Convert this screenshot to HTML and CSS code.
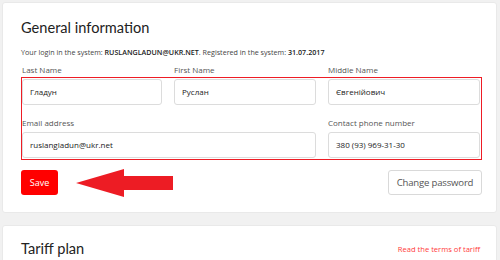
FILE: index.html
```html
<!DOCTYPE html>
<html lang="en">
<head>
    <meta charset="UTF-8">
    <title>Profile</title>
    <link rel="stylesheet" href="styles.css">
</head>
<body>
    <div class="page">
        <div class="card">
            <h2 class="card-title">General information</h2>
            <p class="login-info">Your login in the system: <b>RUSLANGLADUN@UKR.NET</b>. Registered in the system: <b>31.07.2017</b></p>

            <div class="form-area">
                <div class="form-grid">
                    <div class="field">
                        <label>Last Name</label>
                        <div class="input">Гладун</div>
                    </div>
                    <div class="field">
                        <label>First Name</label>
                        <div class="input">Руслан</div>
                    </div>
                    <div class="field">
                        <label>Middle Name</label>
                        <div class="input">Євгенійович</div>
                    </div>
                    <div class="field wide">
                        <label>Email address</label>
                        <div class="input">ruslangladun@ukr.net</div>
                    </div>
                    <div class="field">
                        <label>Contact phone number</label>
                        <div class="input">380 (93) 969-31-30</div>
                    </div>
                </div>
                <!-- annotation frame drawn over the fields -->
                <div class="highlight"></div>
            </div>

            <div class="actions">
                <button class="btn-save">Save</button>
                <svg class="arrow" width="98" height="28" viewBox="0 0 98 28">
                    <polygon points="0,14 48,0 48,7 97,7 97,21 48,21 48,28" fill="#ed1c24"/>
                </svg>
                <button class="btn-outline">Change password</button>
            </div>
        </div>

        <div class="card card-tariff">
            <div class="card-head">
                <h2 class="card-title">Tariff plan</h2>
                <a class="terms-link">Read the terms of tariff</a>
            </div>
        </div>
    </div>
</body>
</html>
```

FILE: styles.css
```css
body {
    margin: 0;
    background-color: #f1f1f1;
    font-family: "Open Sans", "Noto Sans", sans-serif;
    color: #333;
}

.page {
    padding: 2px 3px 0 2px;
    display: flex;
    flex-direction: column;
    gap: 12px;
}

.card {
    background-color: #fff;
    border: 1px solid #e9e9e9;
    border-radius: 3px;
    padding: 14px 16px 17px 18px;
}

.card-title {
    margin: 0;
    font-family: Lato, "Open Sans", sans-serif;
    font-size: 14.6px;
    font-weight: 400;
    line-height: 22px;
    color: #222;
}

.login-info {
    margin: 8px 0 0;
    font-size: 7.15px;
    line-height: 11px;
    color: #444;
}

.login-info b {
    font-weight: 600;
    color: #222;
}

.form-area {
    position: relative;
    margin-top: 6px;
}

.form-grid {
    display: grid;
    grid-template-columns: 140px 142px 152px;
    column-gap: 12px;
    row-gap: 12px;
    padding-left: 1px;
}

.field {
    display: flex;
    flex-direction: column;
    gap: 3px;
}

.field.wide {
    grid-column: span 2;
}

label {
    font-size: 8px;
    line-height: 12px;
    color: #555;
}

.input {
    height: 24px;
    border: 1px solid #dcdcdc;
    border-radius: 3px;
    padding: 0 7px;
    font-size: 8px;
    line-height: 24px;
    color: #222;
}

.highlight {
    position: absolute;
    left: 0;
    top: 13px;
    width: 459px;
    height: 81px;
    border: 1px solid #ee1c25;
    pointer-events: none;
}

.actions {
    position: relative;
    display: flex;
    justify-content: space-between;
    align-items: center;
    margin-top: 12px;
    width: 461px;
}

.btn-save {
    width: 37px;
    height: 25px;
    background-color: #ff0000;
    color: #fff;
    border: none;
    border-radius: 3px;
    font-family: inherit;
    font-size: 9px;
    padding: 0;
}

.arrow {
    position: absolute;
    left: 55px;
    top: -1px;
}

.btn-outline {
    width: 94px;
    height: 25px;
    background-color: #fff;
    color: #555;
    border: 1px solid #d9d9d9;
    border-radius: 3px;
    font-family: inherit;
    font-size: 9.6px;
    letter-spacing: -0.2px;
    padding: 0;
}

.card-tariff {
    padding-top: 12px;
}

.card-head {
    display: flex;
    justify-content: space-between;
    align-items: center;
}

.terms-link {
    font-size: 7.6px;
    color: #ff3b3b;
}
```
